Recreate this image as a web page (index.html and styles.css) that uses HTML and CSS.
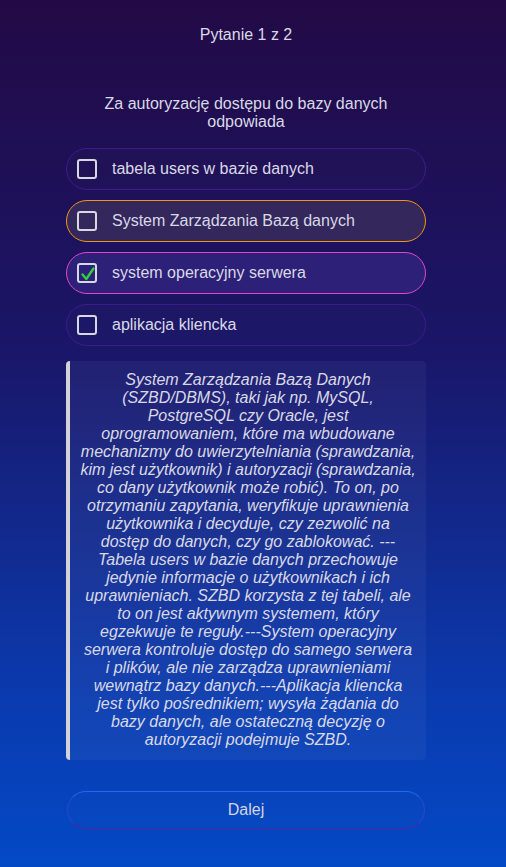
FILE: index.html
```html
<!DOCTYPE html>
<html lang="pl">
<head>
<meta charset="utf-8">
<title>Quiz</title>
<link rel="stylesheet" href="styles.css">
</head>
<body>
<main class="quiz">
  <div class="counter">Pytanie 1 z 2</div>
  <h1 class="question">Za autoryzację dostępu do bazy danych odpowiada</h1>
  <ul class="options">
    <li class="option">
      <span class="box"></span>
      <span class="label">tabela users w bazie danych</span>
    </li>
    <li class="option option-correct">
      <span class="box"></span>
      <span class="label">System Zarządzania Bazą danych</span>
    </li>
    <li class="option option-chosen">
      <span class="box">
        <svg class="tick" viewBox="0 0 20 20" width="20" height="20" aria-hidden="true"><path d="M4.5 10.5 L8.3 15 L15.5 4.5" fill="none" stroke="#2fcf3f" stroke-width="2.4" stroke-linecap="round" stroke-linejoin="round"/></svg>
      </span>
      <span class="label">system operacyjny serwera</span>
    </li>
    <li class="option">
      <span class="box"></span>
      <span class="label">aplikacja kliencka</span>
    </li>
  </ul>
  <div class="explanation">System Zarządzania Bazą Danych (SZBD/DBMS), taki jak np. MySQL, PostgreSQL czy Oracle, jest oprogramowaniem, które ma wbudowane mechanizmy do uwierzytelniania (sprawdzania, kim jest użytkownik) i autoryzacji (sprawdzania, co dany użytkownik może robić). To on, po otrzymaniu zapytania, weryfikuje uprawnienia użytkownika i decyduje, czy zezwolić na dostęp do danych, czy go zablokować. ---Tabela users w bazie danych przechowuje jedynie informacje o użytkownikach i ich uprawnieniach. SZBD korzysta z tej tabeli, ale to on jest aktywnym systemem, który egzekwuje te reguły.---System operacyjny serwera kontroluje dostęp do samego serwera i plików, ale nie zarządza uprawnieniami wewnątrz bazy danych.---Aplikacja kliencka jest tylko pośrednikiem; wysyła żądania do bazy danych, ale ostateczną decyzję o autoryzacji podejmuje SZBD.</div>
  <button class="next" type="button">Dalej</button>
</main>
</body>
</html>
```

FILE: styles.css
```css
html, body {
  margin: 0;
  padding: 0;
}
body {
  min-height: 867px;
  background: linear-gradient(180deg, #230a46 0%, #1a1668 40%, #0a3aae 80%, #0349c6 100%);
  font-family: "Liberation Sans", Arial, sans-serif;
  color: #d9d9e6;
  padding-right: 14px;
  box-sizing: border-box;
}
.quiz {
  width: 360px;
  margin: 0 auto;
  padding-top: 25px;
  display: flex;
  flex-direction: column;
}
.counter {
  font-size: 16px;
  text-align: center;
  line-height: 19px;
}
.question {
  margin: 51px 0 0;
  font-size: 16px;
  font-weight: normal;
  text-align: center;
  line-height: 18px;
  padding: 0 30px;
}
.options {
  list-style: none;
  margin: 17px 0 0;
  padding: 0;
  display: flex;
  flex-direction: column;
  gap: 10px;
}
.option {
  height: 42px;
  box-sizing: border-box;
  border: 1px solid #3f1a8e;
  border-radius: 21px;
  display: flex;
  align-items: center;
  padding-left: 10px;
  font-size: 16px;
  background: rgba(255, 255, 255, 0.01);
}
.option-correct {
  border-color: #f39512;
  background: #33275c;
}
.option-chosen {
  border-color: #e046c6;
  background: #2d2078;
}
.box {
  width: 20px;
  height: 20px;
  box-sizing: border-box;
  border: 2px solid #d8d8e0;
  border-radius: 3px;
  margin-right: 15px;
  flex: none;
  display: flex;
  align-items: center;
  justify-content: center;
  position: relative;
}
.tick {
  position: absolute;
  left: -1px;
  top: -1px;
}
.label {
  line-height: 18px;
}
.explanation {
  margin-top: 15px;
  border-left: 4px solid #d2d2d8;
  border-radius: 4px;
  background: rgba(255, 255, 255, 0.045);
  padding: 10px 10px 11px;
  font-style: italic;
  font-size: 16px;
  line-height: 18px;
  text-align: center;
}
.next {
  margin: 31px auto 0;
  width: 358px;
  height: 38px;
  border-radius: 19px;
  border: 1px solid #2c48c8;
  border-top-color: #2468ec;
  border-bottom-color: #5226a8;
  background: rgba(255, 255, 255, 0.01);
  color: #d4d4e4;
  font-family: "Liberation Sans", Arial, sans-serif;
  font-size: 16px;
  cursor: pointer;
}
```
